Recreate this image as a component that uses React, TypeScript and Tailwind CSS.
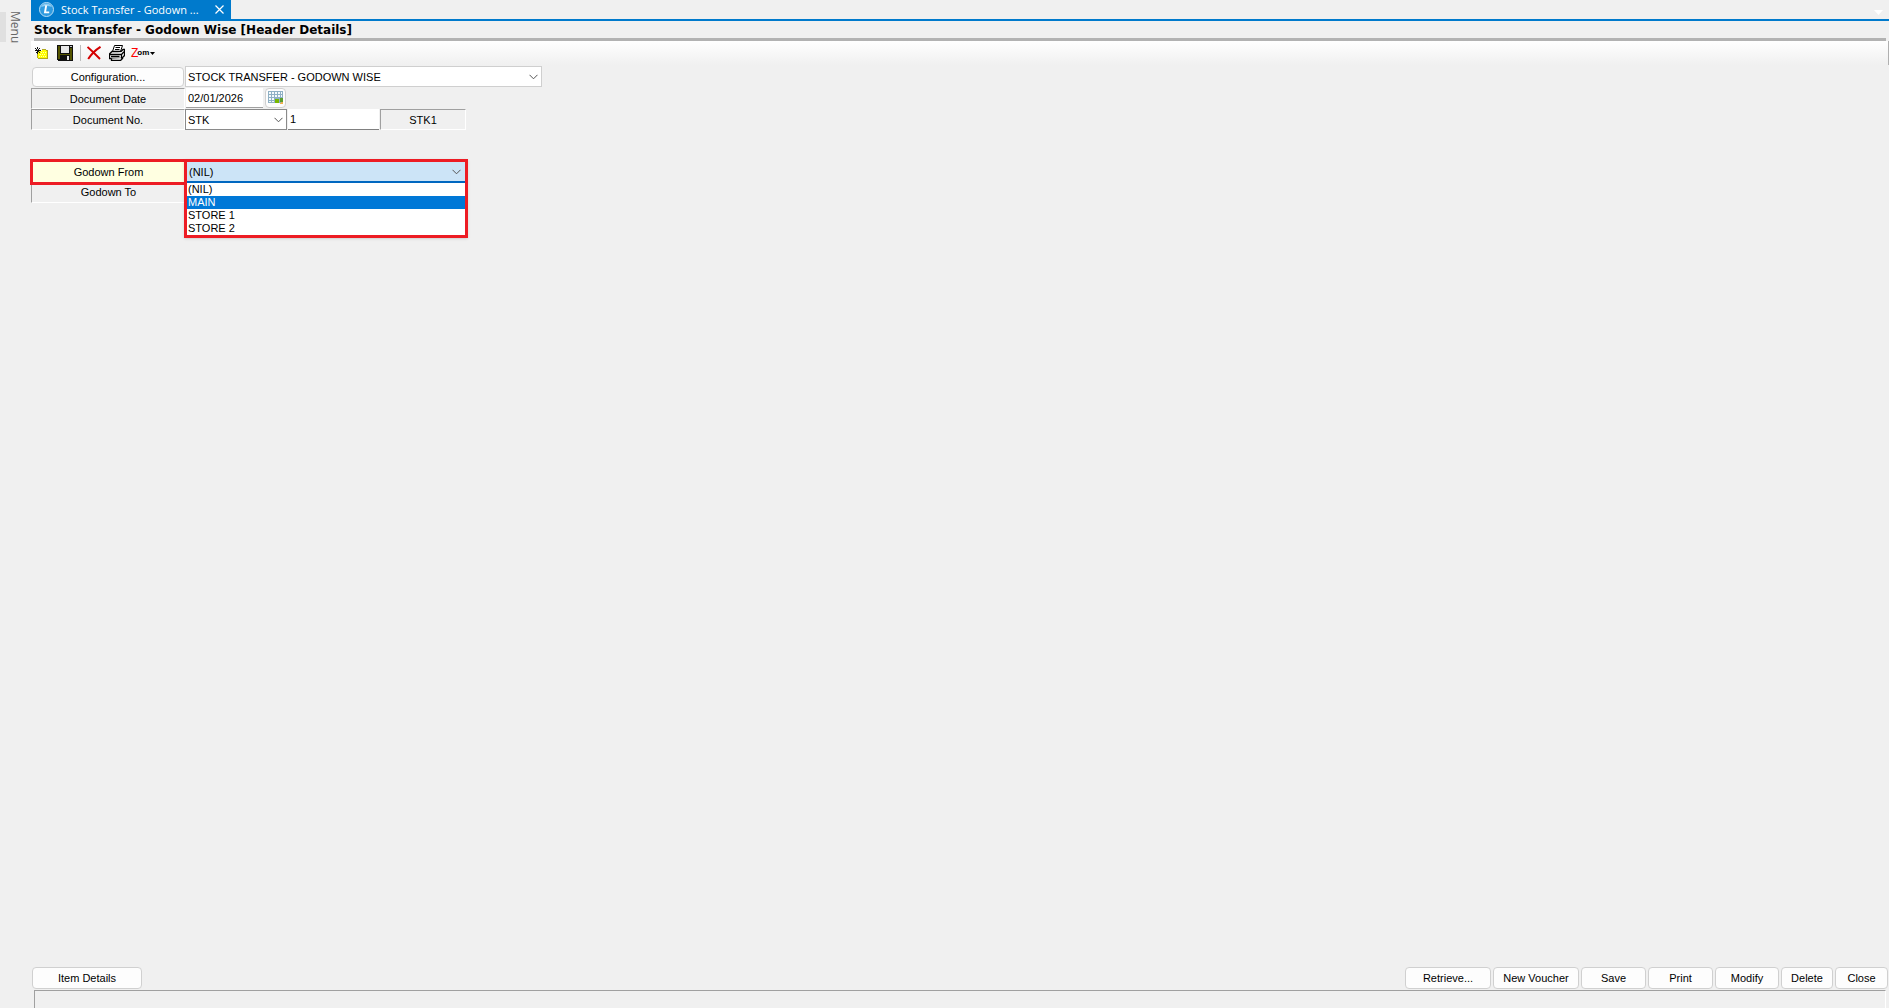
import React, { useState } from 'react';

const CONFIGURATIONS = ['STOCK TRANSFER - GODOWN WISE'];
const SERIES = ['STK'];
const GODOWNS = ['(NIL)', 'MAIN', 'STORE 1', 'STORE 2'];

const ACTIONS = [
  { label: 'Retrieve...', width: 'w-[86px]' },
  { label: 'New Voucher', width: 'w-[86px]' },
  { label: 'Save', width: 'w-[65px]' },
  { label: 'Print', width: 'w-[65px]' },
  { label: 'Modify', width: 'w-16' },
  { label: 'Delete', width: 'w-[52px]' },
  { label: 'Close', width: 'w-[53px]' },
];

const BUTTON = 'rounded border border-[#d0d0d0] bg-[#fdfdfd] text-center hover:bg-[#e5f1fb]';
const SUNKEN =
  'border border-t-[#a0a0a0] border-l-[#a0a0a0] border-r-white border-b-white flex items-center justify-center';

function Chevron() {
  return (
    <svg
      className="pointer-events-none absolute right-1 top-1/2 -translate-y-1/2"
      width="9"
      height="6"
      viewBox="0 0 9 6"
      fill="none"
      stroke="#555"
      aria-hidden="true"
    >
      <path d="M0.5 0.8 4.5 4.8 8.5 0.8" />
    </svg>
  );
}

function LogoIcon() {
  return (
    <svg className="shrink-0" width="15" height="15" viewBox="0 0 15 15" aria-hidden="true">
      <circle cx="7.5" cy="7.5" r="7" fill="#2f9be0" stroke="#b9def5" />
      <path d="M2 5A6 6 0 0 1 13 5Q8 3 2 5Z" fill="#8fcdf2" />
      <path d="M7.2 3.4 6 10.4H10.2" fill="none" stroke="#fff" strokeWidth="1.9" />
    </svg>
  );
}

function NewIcon() {
  return (
    <svg width="14" height="13" viewBox="0 0 14 13" shapeRendering="crispEdges" aria-hidden="true">
      <path d="M3 4H7V3H11V4H12V11H3Z" fill="#ff0" />
      <path
        d="M4 5H5V6H4ZM6 5H7V6H6ZM8 5H9V6H8ZM10 5H11V6H10ZM5 7H6V8H5ZM7 7H8V8H7ZM9 7H10V8H9ZM4 9H5V10H4ZM6 9H7V10H6ZM8 9H9V10H8ZM10 9H11V10H10Z"
        fill="#ffffb0"
      />
      <path d="M7 2H11V3H7ZM11 3H13V4H11ZM12 4H13V12H3V11H12ZM2 6H3V11H2Z" fill="#b0a820" />
      <path d="M2 0H3V2H2ZM0 1H1V2H0ZM1 2H2V3H1ZM4 1H5V2H4ZM3 2H4V3H3ZM0 3H6V4H0ZM2 4H3V7H2ZM1 5H2V6H1ZM3 4H4V5H3ZM4 5H5V6H4Z" fill="#111" />
    </svg>
  );
}

function SaveIcon() {
  return (
    <svg width="16" height="16" viewBox="0 0 16 16" shapeRendering="crispEdges" aria-hidden="true">
      <path d="M0 0H16V16H1L0 15Z" fill="#111" />
      <path d="M1 1H3V9H13V3H15V15H13V10H3V14H1Z" fill="#555500" />
      <path d="M4 1H12V8H4Z" fill="#e8e8e8" />
      <path d="M13 1H15V2H13Z" fill="#ccc" />
      <path d="M10 11H12V15H10Z" fill="#e8e8e8" />
    </svg>
  );
}

function DeleteIcon() {
  return (
    <svg width="14" height="14" viewBox="0 0 14 14" fill="none" stroke="#d40000" aria-hidden="true">
      <path d="M0.5 1 6 6 13 13" strokeWidth="1.9" />
      <path d="M13.5 0.8Q6 5.5 1.2 13" strokeWidth="2" />
    </svg>
  );
}

function PrintIcon() {
  return (
    <svg width="16" height="16" viewBox="0 0 16 16" fill="#fff" stroke="#000" aria-hidden="true">
      <path d="M5.5 0.5H13.5L11.5 6.5H3.5Z" />
      <path d="M6.5 2.5H11M6 4.5H10.5" />
      <path d="M3 6.5H12L14 4.5H15.5V10.5L12.5 13.5H0.5V9Z" strokeWidth="1.3" />
      <path d="M0.5 9.5H12.5L15 6.8M12.5 9.5V13.5M2.5 13.5V15.5H11.5L14 13" strokeWidth="1.3" />
      <path d="M2 11.5H10.5" strokeWidth="1.4" />
    </svg>
  );
}

function CalendarIcon() {
  return (
    <svg width="16" height="14" viewBox="0 0 16 14" shapeRendering="crispEdges" aria-hidden="true">
      <path d="M0 0H15V12H0Z" fill="#8fb0c4" />
      <path
        d="M1 1H3V3H1ZM4 1H6V3H4ZM7 1H9V3H7ZM10 1H12V3H10ZM13 1H14V3H13ZM1 4H3V6H1ZM4 4H6V6H4ZM7 4H9V6H7ZM10 4H12V6H10ZM13 4H14V6H13ZM1 7H3V9H1ZM4 7H6V9H4ZM1 10H3V11H1ZM4 10H6V11H4Z"
        fill="#f4fafc"
      />
      <path d="M7 8H11V12H7Z" fill="#78b800" />
      <path d="M12 7H15V11H12Z" fill="#5b9d2c" />
      <path d="M13 11H15V13H12V12H13Z" fill="#f0b050" />
    </svg>
  );
}

export default function App() {
  const [godown, setGodown] = useState('(NIL)');
  const [active, setActive] = useState('MAIN');

  return (
    <div className="flex min-h-screen bg-[#f0f0f0] text-[11px] leading-[14px] text-black font-['Liberation_Sans',Arial,sans-serif]">
      {/* Collapsed side menu */}
      <aside className="w-[31px] shrink-0 pt-3">
        <button className="flex h-[30px] items-center gap-0.5">
          <span className="h-full w-1.5 bg-[#e0e0e0]" />
          <span className="font-['Open_Sans',sans-serif] text-[12px] leading-[14px] text-[#666] [writing-mode:vertical-rl]">
            Menu
          </span>
        </button>
      </aside>

      <div className="flex min-w-0 grow flex-col">
        {/* Document tabs */}
        <div className="flex h-[21px] items-start justify-between border-b-2 border-[#007acc]">
          <div className="flex h-[19px] w-[200px] items-center bg-[#007acc] pl-2 font-['Open_Sans',sans-serif] text-white">
            <LogoIcon />
            <span className="grow whitespace-nowrap pl-[7px]">Stock Transfer - Godown ...</span>
            <button aria-label="Close tab" className="px-[7px]">
              <svg width="9" height="9" viewBox="0 0 9 9" stroke="#fff" strokeWidth="1.2" aria-hidden="true">
                <path d="M0.5 0.5 8.5 8.5M8.5 0.5 0.5 8.5" />
              </svg>
            </button>
          </div>
          <button aria-label="Open tabs" className="mt-2.5 mr-1.5">
            <svg width="9" height="5" viewBox="0 0 9 5" fill="#fff" aria-hidden="true">
              <path d="M0 0H9L4.5 5Z" />
            </svg>
          </button>
        </div>

        <h1 className="mr-[3px] ml-[3px] h-5 border-b-3 border-[#b2b2b2] pt-0.5 font-['DejaVu_Sans',Verdana,sans-serif] text-[12px] font-bold">
          Stock Transfer - Godown Wise [Header Details]
        </h1>

        {/* Toolbar */}
        <div className="flex h-6 items-center border-r border-[#b0b0b0] bg-linear-to-b from-white to-[#f0f0f0] pl-1">
          <button aria-label="New" className="w-[22px]"><NewIcon /></button>
          <button aria-label="Save" className="w-[23px]"><SaveIcon /></button>
          <span className="mr-1.5 h-4 w-px bg-[#bdbdbd]" />
          <button aria-label="Delete" className="w-[22px]"><DeleteIcon /></button>
          <button aria-label="Print" className="w-[22px]"><PrintIcon /></button>
          <button className="flex items-center text-[8px] font-bold">
            <span className="-mr-px text-[12px] font-normal text-[#f00]">Z</span>om
            <svg className="ml-px" width="5" height="3" viewBox="0 0 5 3" aria-hidden="true">
              <path d="M0 0H5L2.5 3Z" />
            </svg>
          </button>
        </div>

        <main className="flex grow flex-col items-start">
          <div className="flex h-[22px] items-center gap-px pt-px pl-px">
            <button className={`h-5 w-[152px] ${BUTTON}`}>Configuration...</button>
            <div className="relative">
              <select
                aria-label="Configuration"
                className="block h-[21px] w-[357px] appearance-none border border-[#cfcfcf] bg-white pl-0.5"
              >
                {CONFIGURATIONS.map((c) => <option key={c}>{c}</option>)}
              </select>
              <Chevron />
            </div>
          </div>

          <div className="mt-px flex h-[21px]">
            <label htmlFor="doc-date" className={`w-[154px] ${SUNKEN}`}>Document Date</label>
            <input
              id="doc-date"
              defaultValue="02/01/2026"
              className="mr-0.5 ml-px h-5 w-[77px] border-b border-[#a0a0a0] bg-white pl-0.5"
            />
            <button aria-label="Pick date" className={`flex h-5 w-[21px] items-center justify-center ${BUTTON}`}>
              <CalendarIcon />
            </button>
          </div>

          <div className="flex h-[21px]">
            <label htmlFor="doc-no" className={`w-[154px] ${SUNKEN}`}>Document No.</label>
            <div className="relative">
              <select
                aria-label="Series"
                className="block h-[21px] w-[102px] appearance-none border border-[#8a8a8a] bg-white pl-0.5"
              >
                {SERIES.map((s) => <option key={s}>{s}</option>)}
              </select>
              <Chevron />
            </div>
            <input
              id="doc-no"
              defaultValue="1"
              className="mr-px ml-px h-[21px] w-[91px] border-b border-[#808080] bg-white pl-0.5"
            />
            <output className={`w-[86px] ${SUNKEN}`}>STK1</output>
          </div>

          {/* Godown selection */}
          <div className="relative -ml-px mt-[29px] flex h-[26px]">
            <label
              htmlFor="godown-from"
              className="flex w-[157px] items-center justify-center border-3 border-[#ed1c24] bg-[#ffffe1]"
            >
              Godown From
            </label>
            <div className="absolute left-[154px] z-10 w-[284px] border-3 border-[#ed1c24] bg-white shadow-sm">
              <div className="relative border-b-2 border-[#0067c0]">
                <select
                  id="godown-from"
                  value={godown}
                  onChange={(e) => setGodown(e.target.value)}
                  className="block h-[19px] w-full appearance-none bg-[#cce4f7] pl-0.5"
                >
                  {GODOWNS.map((g) => <option key={g}>{g}</option>)}
                </select>
                <Chevron />
              </div>
              <ul role="listbox" aria-label="Godowns" className="leading-[13px]">
                {GODOWNS.map((g) => (
                  <li
                    key={g}
                    role="option"
                    aria-selected={g === active}
                    onMouseEnter={() => setActive(g)}
                    onClick={() => setGodown(g)}
                    className={g === active ? 'bg-[#0078d7] pl-px text-white' : 'pl-px'}
                  >
                    {g}
                  </li>
                ))}
              </ul>
            </div>
          </div>
          <div className="flex h-[18px] w-[154px] justify-center border-b border-l border-b-white border-l-[#a0a0a0]">
            Godown To
          </div>
        </main>

        {/* Actions */}
        <footer>
          <div className="flex items-center justify-between pr-px pl-px">
            <button className={`h-[22px] w-[110px] ${BUTTON}`}>Item Details</button>
            <div className="flex gap-0.5">
              {ACTIONS.map((a) => (
                <button key={a.label} className={`h-[22px] ${a.width} ${BUTTON}`}>{a.label}</button>
              ))}
            </div>
          </div>
          <div className="mt-px mr-[3px] ml-[3px] h-[18px] border-t border-r border-l border-t-[#a0a0a0] border-r-white border-l-[#a0a0a0]" />
        </footer>
      </div>
    </div>
  );
}
